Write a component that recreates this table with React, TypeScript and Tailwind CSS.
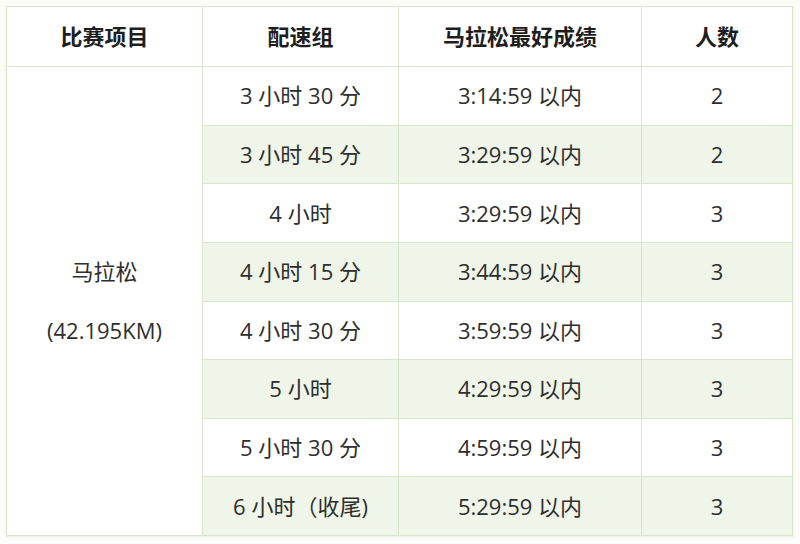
import React from "react";

const rows = [
  ["3 小时 30 分", "3:14:59 以内", "2"],
  ["3 小时 45 分", "3:29:59 以内", "2"],
  ["4 小时", "3:29:59 以内", "3"],
  ["4 小时 15 分", "3:44:59 以内", "3"],
  ["4 小时 30 分", "3:59:59 以内", "3"],
  ["5 小时", "4:29:59 以内", "3"],
  ["5 小时 30 分", "4:59:59 以内", "3"],
  ["6 小时（收尾)", "5:29:59 以内", "3"],
];

export default function App() {
  return (
    <div
      className="w-[800px] h-[544px] bg-[#fcfdf9] pt-[6px] pl-[6px]"
      style={{ fontFamily: '"Open Sans", "Noto Sans CJK SC", sans-serif' }}
    >
      <table className="table-fixed border-collapse w-[786px] h-[530px] border border-[#a9c49a] text-[#2e2e2e] text-[22px] shadow-[0_1px_2px_rgba(0,0,0,0.08)]">
        <colgroup>
          <col className="w-[196px]" />
          <col className="w-[196px]" />
          <col className="w-[243px]" />
          <col className="w-[151px]" />
        </colgroup>
        <thead>
          <tr className="h-[60px] bg-white">
            <th className="border border-[#d8e6cc] font-bold text-[22px] text-[#1e1e1e]">比赛项目</th>
            <th className="border border-[#d8e6cc] font-bold text-[22px] text-[#1e1e1e]">配速组</th>
            <th className="border border-[#d8e6cc] font-bold text-[22px] text-[#1e1e1e]">马拉松最好成绩</th>
            <th className="border border-[#d8e6cc] font-bold text-[22px] text-[#1e1e1e]">人数</th>
          </tr>
        </thead>
        <tbody>
          {rows.map((r, i) => (
            <tr key={i} className={i % 2 === 1 ? "bg-[#eff5e8]" : "bg-white"}>
              {i === 0 && (
                <td rowSpan={8} className="border border-[#d8e6cc] bg-white text-center align-middle">
                  <div className="flex flex-col items-center gap-[26px]">
                    <span>马拉松</span>
                    <span>(42.195KM)</span>
                  </div>
                </td>
              )}
              <td className="border border-[#d8e6cc] text-center">{r[0]}</td>
              <td className="border border-[#d8e6cc] text-center">{r[1]}</td>
              <td className="border border-[#d8e6cc] text-center">{r[2]}</td>
            </tr>
          ))}
        </tbody>
      </table>
    </div>
  );
}
